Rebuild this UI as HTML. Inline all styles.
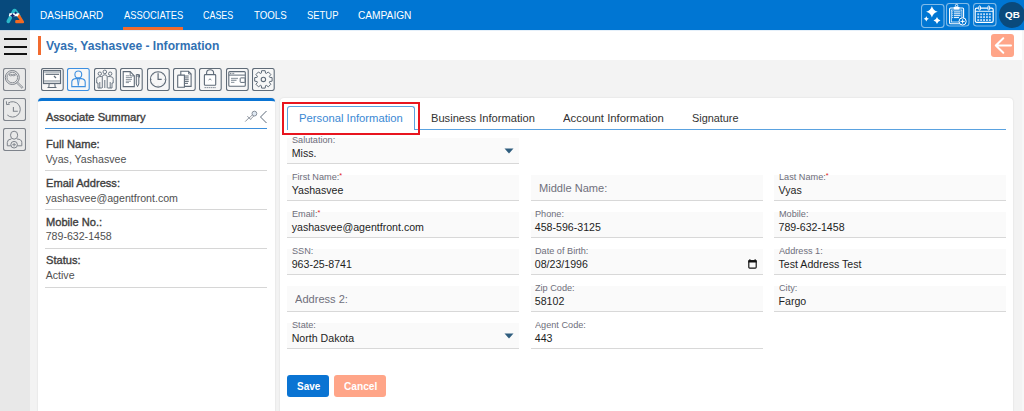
<!DOCTYPE html>
<html><head><meta charset="utf-8">
<style>
*{box-sizing:border-box;margin:0;padding:0}
html,body{width:1024px;height:411px;overflow:hidden;background:#f3f3f3;font-family:"Liberation Sans",sans-serif;position:relative}
div{position:absolute}
.t{height:0;line-height:0;white-space:nowrap;transform-origin:0 0}
#nav{left:0;top:0;width:1024px;height:30px;background:#0076d3}
#logo{left:0;top:0;width:30px;height:30px;background:#074a7d}
#ul{left:123px;top:27px;width:60px;height:3px;background:#f26b2f}
.tico{width:23px;height:23px;border:1px solid rgba(255,255,255,.45);border-radius:3px}
#avatar{left:999px;top:2px;width:26px;height:26px;border-radius:50%;background:#0a4a7c}
#side{left:0;top:30px;width:30px;height:381px;background:#e8e8e8}
.ham{left:4px;width:23px;height:2px;background:#111}
.sico{left:3px;width:23px;height:23px;border:1px solid #8a8f98;border-radius:2px}
#hdr{left:30px;top:30px;width:994px;height:30px;background:#fff}
#obar{left:38px;top:36px;width:3px;height:19px;background:#f26b2f}
#back{left:991px;top:34px;width:23px;height:23px;background:#ffa588;border-radius:3px}
.tb{top:68px;width:23px;height:23px;border:1px solid #6f7884;border-radius:2px;background:#f7f7f7}
#sum{left:38px;top:98px;width:237px;height:320px;background:#fff;border-top:3px solid #0a74d3;border-radius:4px 4px 0 0;box-shadow:0 0 2px rgba(0,0,0,.12)}
#main{left:280px;top:98px;width:733px;height:320px;background:#fff;border-radius:4px 4px 0 0;box-shadow:0 0 2px rgba(0,0,0,.12)}
.dv{left:45px;width:222px;height:1px;background:#d6d6d6}
.f{width:232px;height:26px;background:#fafafa;border-bottom:1px solid #d8d8d8}
.btn{top:375px;height:22px;border-radius:3px}

</style></head><body>
<div id="nav"></div>
<div id="logo"></div>
<div id="ul"></div>
<div id="avatar"></div>

<div id="side"></div>
<div class="ham" style="top:38px"></div>
<div class="ham" style="top:46px"></div>
<div class="ham" style="top:53px"></div>

<div id="hdr"></div>
<div id="obar"></div>
<div id="back"></div>
<div style="left:1022px;top:30px;width:2px;height:381px;background:#f7f7f7"></div>
<div style="left:0;top:30px;width:1024px;height:1px;background:rgba(0,110,210,.10)"></div>


<div id="sum"></div>
<div class="dv" style="top:128px;background:#3b8fdc"></div>
<div class="dv" style="top:170px"></div>
<div class="dv" style="top:209px"></div>
<div class="dv" style="top:248px"></div>
<div class="dv" style="top:287px"></div>

<div id="main"></div>
<div style="left:287px;top:129px;width:719px;height:1px;background:#5aa2e0"></div>
<div style="left:287px;top:106px;width:128px;height:24px;background:#fff;border:1px solid #5aa2e0;border-bottom:none;border-radius:3px 3px 0 0"></div>
<div style="left:282px;top:102px;width:138px;height:33px;border:2px solid #e8151f"></div>

<div class="f" style="left:287px;top:138px"></div>
<div class="f" style="left:287px;top:175px"></div>
<div class="f" style="left:531px;top:175px"></div>
<div class="f" style="left:774px;top:175px"></div>
<div class="f" style="left:287px;top:212px"></div>
<div class="f" style="left:531px;top:212px"></div>
<div class="f" style="left:774px;top:212px"></div>
<div class="f" style="left:287px;top:249px"></div>
<div class="f" style="left:531px;top:249px"></div>
<div class="f" style="left:774px;top:249px"></div>
<div class="f" style="left:287px;top:286px"></div>
<div class="f" style="left:531px;top:286px"></div>
<div class="f" style="left:774px;top:286px"></div>
<div class="f" style="left:287px;top:323px"></div>
<div class="f" style="left:531px;top:323px;background:#fff"></div>

<div class="btn" style="left:287px;width:42px;background:#0a74d3"></div>
<div class="btn" style="left:334px;width:52px;background:#ffa588"></div>

<svg style="position:absolute;left:41.0px;top:68px" width="23" height="23" viewBox="0 0 23 23" fill="none"><rect x="0.5" y="0.5" width="21.7" height="22" rx="2" stroke="#5f6b78" stroke-width="1.1" fill="#f7f7f7"/><rect x="2.5" y="2.5" width="17" height="13" stroke="#5f6b78" stroke-width="1.2" fill="#fff"/>
<rect x="3" y="3" width="16" height="2" fill="#b9c0c6"/>
<line x1="4.5" y1="6.3" x2="18" y2="6.3" stroke="#5f6b78" stroke-width="1.2"/>
<path d="M13 8 l2 2" stroke="#5f6b78" stroke-width="1.3"/>
<rect x="3" y="12" width="16" height="2.5" fill="#b9c0c6"/>
<path d="M8.2 15.5 L7.8 19.3 M13.8 15.5 L14.2 19.3 M6.5 19.5 H15.5" stroke="#5f6b78" stroke-width="1"/></svg>
<svg style="position:absolute;left:67.4px;top:68px" width="23" height="23" viewBox="0 0 23 23" fill="none"><rect x="0.5" y="0.5" width="21.7" height="22" rx="2" stroke="#3d8fe0" stroke-width="1.1" fill="#f7f7f7"/><circle cx="11.3" cy="6.4" r="3.4" stroke="#3d8fe0" stroke-width="1.1"/>
<path d="M4.8 18.6 V14 Q4.8 11 8.5 10.6 H14.3 Q18.2 11 18.2 14 V18.6 Z" stroke="#3d8fe0" stroke-width="1.1"/>
<path d="M10.3 10.8 L11.3 17.5 L12.3 10.8" stroke="#3d8fe0" stroke-width="0.9"/></svg>
<svg style="position:absolute;left:93.8px;top:68px" width="23" height="23" viewBox="0 0 23 23" fill="none"><rect x="0.5" y="0.5" width="21.7" height="22" rx="2" stroke="#5f6b78" stroke-width="1.1" fill="#f7f7f7"/><g stroke="#5f6b78" stroke-width="0.9">
<circle cx="10.8" cy="3.9" r="1.8"/><circle cx="5.8" cy="5.7" r="1.7"/><circle cx="16.2" cy="5.7" r="1.7"/>
<path d="M8.3 20 V8.8 Q8.3 6.8 10.8 6.8 Q13.2 6.8 13.2 8.8 V20 M10.8 12 V20"/>
<path d="M7.9 8.6 Q5.8 8.2 3.5 9.2 Q2.6 9.8 2.7 11.5 V15 H4 V20 H7.9 M5.8 14 V20"/>
<path d="M13.6 8.6 Q16.2 8.2 18.4 9.2 Q19.3 9.8 19.2 11.5 V15 H18 V20 H13.6 M16.2 14 V20"/>
</g></svg>
<svg style="position:absolute;left:120.2px;top:68px" width="23" height="23" viewBox="0 0 23 23" fill="none"><rect x="0.5" y="0.5" width="21.7" height="22" rx="2" stroke="#5f6b78" stroke-width="1.1" fill="#f7f7f7"/><path d="M3.2 3.6 H10.2 L14.3 7.9 V18.6 H3.2 Z" stroke="#5f6b78" stroke-width="1.1" fill="#fff"/>
<path d="M10.2 3.6 V7.9 H14.3" stroke="#5f6b78" stroke-width="0.9"/>
<g stroke="#8c959e" stroke-width="1"><line x1="5.8" y1="7.8" x2="9.5" y2="7.8"/><line x1="5.8" y1="9.6" x2="12" y2="9.6"/><line x1="5.8" y1="11.4" x2="12" y2="11.4"/><line x1="5.8" y1="13.2" x2="11" y2="13.2"/><line x1="5.8" y1="14.6" x2="9" y2="14.6"/></g>
<path d="M16.3 6.5 H18.8 V16 L17.55 18.6 L16.3 16 Z M16.3 8 H18.8 M18.8 6.8 H19.5 V9.5" stroke="#5f6b78" stroke-width="1"/></svg>
<svg style="position:absolute;left:146.6px;top:68px" width="23" height="23" viewBox="0 0 23 23" fill="none"><rect x="0.5" y="0.5" width="21.7" height="22" rx="2" stroke="#5f6b78" stroke-width="1.1" fill="#f7f7f7"/><circle cx="11.1" cy="11.4" r="7.7" stroke="#5f6b78" stroke-width="1.1"/>
<path d="M11.1 5.3 V11.4 H14.7" stroke="#5f6b78" stroke-width="1.2"/>
<g stroke="#8a939c" stroke-width="0.8"><path d="M11.1 4.2 v1 M11.1 17.6 v1 M3.9 11.4 h1 M17.3 11.4 h1 M6 6.3 l0.7 0.7 M15.5 15.8 l0.7 0.7 M16.2 6.3 l-0.7 0.7 M6.7 15.8 l-0.7 0.7"/></g></svg>
<svg style="position:absolute;left:173.0px;top:68px" width="23" height="23" viewBox="0 0 23 23" fill="none"><rect x="0.5" y="0.5" width="21.7" height="22" rx="2" stroke="#5f6b78" stroke-width="1.1" fill="#f7f7f7"/><path d="M7.8 3.3 H15.5 L18.1 6 V18.4 H7.8 Z" stroke="#5f6b78" stroke-width="1.1" fill="#fff"/>
<path d="M15.5 3.3 V6 H18.1" stroke="#5f6b78" stroke-width="0.8"/>
<g stroke="#6e7883" stroke-width="1.1"><line x1="11.4" y1="8" x2="15.7" y2="8"/><line x1="11.4" y1="9.9" x2="15.7" y2="9.9"/><line x1="11.4" y1="11.7" x2="15.7" y2="11.7"/><line x1="11.4" y1="13.5" x2="15.7" y2="13.5"/><line x1="11.4" y1="15.4" x2="15" y2="15.4"/></g>
<path d="M4.7 7.8 Q4.7 7.1 5.7 7.1 H11.4 V19.3 H4.7 Z" stroke="#5f6b78" stroke-width="1.1" fill="#fff"/></svg>
<svg style="position:absolute;left:199.4px;top:68px" width="23" height="23" viewBox="0 0 23 23" fill="none"><rect x="0.5" y="0.5" width="21.7" height="22" rx="2" stroke="#5f6b78" stroke-width="1.1" fill="#f7f7f7"/><path d="M7.6 6.6 V4.8 Q7.6 1.7 11.1 1.7 Q14.6 1.7 14.6 4.8 V6.6" stroke="#5f6b78" stroke-width="1.1"/>
<rect x="5.4" y="6.6" width="11.3" height="10.6" rx="0.8" stroke="#5f6b78" stroke-width="1.1" fill="#fff"/>
<path d="M9.6 12 L11 10.8 L12.4 12" stroke="#5f6b78" stroke-width="0.9"/>
<g fill="#5f6b78"><rect x="5.6" y="19.2" width="1.2" height="0.9"/><rect x="7.6" y="19.2" width="1.2" height="0.9"/><rect x="9.6" y="19.2" width="1.2" height="0.9"/><rect x="11.6" y="19.2" width="1.2" height="0.9"/><rect x="13.6" y="19.2" width="1.2" height="0.9"/><rect x="15.4" y="19.2" width="1.2" height="0.9"/></g></svg>
<svg style="position:absolute;left:225.8px;top:68px" width="23" height="23" viewBox="0 0 23 23" fill="none"><rect x="0.5" y="0.5" width="21.7" height="22" rx="2" stroke="#5f6b78" stroke-width="1.1" fill="#f7f7f7"/><rect x="2.8" y="3.6" width="16.5" height="14.7" rx="1" stroke="#5f6b78" stroke-width="1.1" fill="#fff"/>
<line x1="2.8" y1="7.1" x2="19.3" y2="7.1" stroke="#5f6b78" stroke-width="1"/>
<g fill="#7d8791"><rect x="4" y="4.8" width="1" height="1.3"/><rect x="5.6" y="4.8" width="1" height="1.3"/><rect x="7.2" y="4.8" width="1" height="1.3"/></g>
<g fill="#98a1a9"><rect x="5" y="9.8" width="7" height="1.3"/><rect x="5" y="11.7" width="5.5" height="1.3"/><rect x="5" y="13.8" width="3.4" height="1.2"/></g>
<rect x="14.2" y="9.9" width="5" height="4.5" rx="0.6" stroke="#5f6b78" stroke-width="1"/></svg>
<svg style="position:absolute;left:252.2px;top:68px" width="23" height="23" viewBox="0 0 23 23" fill="none"><rect x="0.5" y="0.5" width="21.7" height="22" rx="2" stroke="#5f6b78" stroke-width="1.1" fill="#f7f7f7"/><path d="M9.26 5.16 L9.63 2.68 L13.17 2.68 L13.54 5.16 L14.30 5.47 L16.32 3.98 L18.82 6.48 L17.33 8.50 L17.64 9.26 L20.12 9.63 L20.12 13.17 L17.64 13.54 L17.33 14.30 L18.82 16.32 L16.32 18.82 L14.30 17.33 L13.54 17.64 L13.17 20.12 L9.63 20.12 L9.26 17.64 L8.50 17.33 L6.48 18.82 L3.98 16.32 L5.47 14.30 L5.16 13.54 L2.68 13.17 L2.68 9.63 L5.16 9.26 L5.47 8.50 L3.98 6.48 L6.48 3.98 L8.50 5.47Z" stroke="#5f6b78" stroke-width="1" stroke-linejoin="round"/>
<circle cx="11.4" cy="11.4" r="2.2" stroke="#5f6b78" stroke-width="1.1"/></svg>
<svg style="position:absolute;left:3px;top:68px" width="23" height="23" viewBox="0 0 23 23" fill="none"><rect x="0.5" y="0.5" width="22" height="22" rx="2" stroke="#7e838b" stroke-width="1.1" fill="#e9e9e9"/><circle cx="9.3" cy="9.5" r="7" stroke="#7e838b" stroke-width="1"/><circle cx="9.3" cy="9.5" r="5.3" stroke="#7e838b" stroke-width="0.9"/>
<path d="M14.5 14 L20 19.3 L19 20.3 L13.5 15" stroke="#7e838b" stroke-width="0.9"/>
<path d="M6 7 Q7.5 5.5 9.3 6.8 Q11 5.5 12.6 7 Q11 8.5 9.3 7.5 Q7.5 8.5 6 7Z" stroke="#7e838b" stroke-width="0.8"/></svg>
<svg style="position:absolute;left:3px;top:98px" width="23" height="23" viewBox="0 0 23 23" fill="none"><rect x="0.5" y="0.5" width="22" height="22" rx="2" stroke="#7e838b" stroke-width="1.1" fill="#e9e9e9"/><path d="M5 5.2 A7.7 7.7 0 1 1 4.3 17" stroke="#7e838b" stroke-width="1"/>
<path d="M3.4 3.3 L3.6 6.6 L6.8 6.2" stroke="#7e838b" stroke-width="1"/>
<path d="M10.4 9 V13.3 H14.8" stroke="#7e838b" stroke-width="1.1"/></svg>
<svg style="position:absolute;left:3px;top:128px" width="23" height="23" viewBox="0 0 23 23" fill="none"><rect x="0.5" y="0.5" width="22" height="22" rx="2" stroke="#7e838b" stroke-width="1.1" fill="#e9e9e9"/><ellipse cx="11.1" cy="7.2" rx="3.6" ry="4" stroke="#7e838b" stroke-width="1"/>
<path d="M4.3 17.8 V14.5 Q4.3 11.2 8.3 11 M18.8 17.8 V14.5 Q18.8 11.2 14 11 M4.3 17.8 H7.8 M18.8 17.8 H14.4" stroke="#7e838b" stroke-width="1"/>
<circle cx="11.1" cy="16.7" r="3.3" stroke="#7e838b" stroke-width="1"/>
<path d="M11.1 14.9 V18.5 M9.3 16.7 H12.9" stroke="#7e838b" stroke-width="0.9"/></svg>
<svg style="position:absolute;left:921px;top:4px" width="24" height="24" viewBox="0 0 24 24" fill="none"><rect x="0.5" y="0.5" width="22.5" height="23" rx="3" stroke="rgba(255,255,255,0.5)" stroke-width="1.1"/><path d="M10.9 2.0 Q12.06 6.64 16.7 7.8 Q12.06 8.959999999999999 10.9 13.6 Q9.74 8.959999999999999 5.1000000000000005 7.8 Q9.74 6.64 10.9 2.0Z" fill="#fff"/><path d="M5.3 12.200000000000001 Q5.82 14.280000000000001 7.9 14.8 Q5.82 15.32 5.3 17.400000000000002 Q4.779999999999999 15.32 2.6999999999999997 14.8 Q4.779999999999999 14.280000000000001 5.3 12.200000000000001Z" fill="#fff"/><path d="M16 13.0 Q16.7 15.8 19.5 16.5 Q16.7 17.2 16 20.0 Q15.3 17.2 12.5 16.5 Q15.3 15.8 16 13.0Z" fill="#fff"/></svg>
<svg style="position:absolute;left:946px;top:3px" width="24" height="24" viewBox="0 0 24 24" fill="none"><rect x="0.5" y="0.5" width="22.5" height="22.5" rx="3" stroke="rgba(255,255,255,0.5)" stroke-width="1.1"/><rect x="3.6" y="5" width="14" height="15.8" rx="1" stroke="#fff" stroke-width="1.1"/>
<rect x="5.3" y="7" width="10.6" height="12" stroke="#fff" stroke-width="0.7"/>
<rect x="7.7" y="3.8" width="5.8" height="2.6" rx="0.8" fill="#fff"/>
<circle cx="10.6" cy="2.6" r="1.2" stroke="#fff" stroke-width="0.9"/>
<g stroke="#fff" stroke-width="1"><line x1="8" y1="8.9" x2="14.5" y2="8.9"/><line x1="8" y1="10.8" x2="14.5" y2="10.8"/><line x1="8" y1="12.7" x2="14.5" y2="12.7"/><line x1="8" y1="14.6" x2="13" y2="14.6"/></g>
<g fill="#fff"><rect x="6.2" y="8.4" width="1" height="1"/><rect x="6.2" y="10.3" width="1" height="1"/><rect x="6.2" y="12.2" width="1" height="1"/><rect x="6.2" y="14.1" width="1" height="1"/></g>
<circle cx="16.6" cy="18.4" r="3.6" fill="#0076d3" stroke="#fff" stroke-width="1"/>
<path d="M16.6 16.3 V20.5 M14.5 18.4 H18.7" stroke="#fff" stroke-width="1"/></svg>
<svg style="position:absolute;left:973px;top:3px" width="24" height="24" viewBox="0 0 24 24" fill="none"><rect x="0.5" y="0.5" width="22.5" height="22.5" rx="3" stroke="rgba(255,255,255,0.5)" stroke-width="1.1"/><rect x="2.2" y="5.2" width="18" height="14.2" rx="1.6" stroke="#fff" stroke-width="1.2"/>
<line x1="2.2" y1="8.3" x2="20.2" y2="8.3" stroke="#fff" stroke-width="0.9"/>
<g stroke="#fff" stroke-width="0.9" fill="#0076d3"><rect x="5.9" y="2.8" width="1.6" height="4.4" rx="0.8"/><rect x="15" y="2.8" width="1.6" height="4.4" rx="0.8"/></g>
<g fill="#bcd9f5"><rect x="4.3" y="10.3" width="1.9" height="1.9"/><rect x="7.2" y="10.3" width="1.9" height="1.9"/><rect x="10.1" y="10.3" width="1.9" height="1.9"/><rect x="13.0" y="10.3" width="1.9" height="1.9"/><rect x="15.9" y="10.3" width="1.9" height="1.9"/><rect x="4.3" y="13.2" width="1.9" height="1.9"/><rect x="7.2" y="13.2" width="1.9" height="1.9"/><rect x="10.1" y="13.2" width="1.9" height="1.9"/><rect x="13.0" y="13.2" width="1.9" height="1.9"/><rect x="15.9" y="13.2" width="1.9" height="1.9"/><rect x="4.3" y="16.1" width="1.9" height="1.9"/><rect x="7.2" y="16.1" width="1.9" height="1.9"/><rect x="10.1" y="16.1" width="1.9" height="1.9"/><rect x="13.0" y="16.1" width="1.9" height="1.9"/><rect x="15.9" y="16.1" width="1.9" height="1.9"/></g></svg>
<svg style="position:absolute;left:0px;top:0px" width="30" height="30" viewBox="0 0 30 30" fill="none"><path d="M8.3 21.4 L13.9 11 Q14.6 9.9 15.3 11 L18.8 16" stroke="#2bb8c9" stroke-width="3.6" stroke-linecap="round" stroke-linejoin="round"/>
<path d="M19 13.4 L24 21.4 Q24.6 23.3 22.6 23.3 H16.2 Q15.2 23.3 15.2 22.3 V21 Q15.2 20.1 16.2 20.1 H19.6 L16.4 15.2 Z" fill="#f26a22"/>
<path d="M9.4 13.3 L19.4 13.3 L17.8 16.2 L8.8 16.2 Z" fill="#fff"/>
<path d="M12.5 12.9 Q13.0 14.9 15.0 15.4 Q13.0 15.9 12.5 17.9 Q12.0 15.9 10.0 15.4 Q12.0 14.9 12.5 12.9Z" fill="#15246a"/><path d="M15.7 11.200000000000001 Q16.04 12.56 17.4 12.9 Q16.04 13.24 15.7 14.6 Q15.36 13.24 14.0 12.9 Q15.36 12.56 15.7 11.200000000000001Z" fill="#15246a"/></svg>
<svg style="position:absolute;left:991px;top:34px" width="23" height="23" viewBox="0 0 23 23" fill="none"><path d="M4.8 11.5 H20 M12.3 4.3 L4.8 11.5 L12.3 18.7" stroke="#fff" stroke-width="2" stroke-linecap="round" stroke-linejoin="round"/></svg>
<svg style="position:absolute;left:244px;top:109px" width="24" height="15" viewBox="0 0 24 15" fill="none"><path d="M1.2 12.6 L5.2 8.6" stroke="#7d8591" stroke-width="0.9"/>
<path d="M3.4 7.2 L7 10.8" stroke="#7d8591" stroke-width="0.9"/>
<path d="M5.3 8.9 L8.8 5.4 M6.6 10.2 L10.1 6.7" stroke="#7d8591" stroke-width="0.8"/>
<circle cx="10.4" cy="4.6" r="2.4" stroke="#7d8591" stroke-width="0.9" fill="#dfe8f2"/>
<path d="M22.5 2 L16.5 8 L22.5 14" stroke="#5d6a7a" stroke-width="1"/></svg>
<svg style="position:absolute;left:504px;top:148px" width="10" height="6" viewBox="0 0 10 6" fill="none"><path d="M0.5 0.5 H9.5 L5 5.5Z" fill="#2f5d7e"/></svg>
<svg style="position:absolute;left:504px;top:333px" width="10" height="6" viewBox="0 0 10 6" fill="none"><path d="M0.5 0.5 H9.5 L5 5.5Z" fill="#2f5d7e"/></svg>
<svg style="position:absolute;left:748px;top:259px" width="10" height="10" viewBox="0 0 10 10" fill="none"><rect x="0.8" y="1.8" width="7.4" height="7.3" rx="0.9" stroke="#111" stroke-width="1.15"/><rect x="0.3" y="1.2" width="8.4" height="2.3" fill="#111"/><rect x="1.2" y="0.3" width="1.3" height="1.2" fill="#111"/><rect x="6.5" y="0.3" width="1.3" height="1.2" fill="#111"/></svg>
<div class="t" style="left:40.2px;top:15.03px;font-size:11.73px;color:#fff;font-weight:normal;transform:scaleX(0.853);">DASHBOARD</div>
<div class="t" style="left:123.8px;top:15.03px;font-size:11.73px;color:#fff;font-weight:normal;transform:scaleX(0.799);">ASSOCIATES</div>
<div class="t" style="left:203.3px;top:15.03px;font-size:11.73px;color:#fff;font-weight:normal;transform:scaleX(0.762);">CASES</div>
<div class="t" style="left:253.9px;top:15.03px;font-size:11.73px;color:#fff;font-weight:normal;transform:scaleX(0.827);">TOOLS</div>
<div class="t" style="left:306.6px;top:15.03px;font-size:11.73px;color:#fff;font-weight:normal;transform:scaleX(0.805);">SETUP</div>
<div class="t" style="left:358.3px;top:15.03px;font-size:11.73px;color:#fff;font-weight:normal;transform:scaleX(0.867);">CAMPAIGN</div>
<div class="t" style="left:1004.5px;top:15.31px;font-size:9.78px;color:#fff;font-weight:bold;transform:scaleX(1.016);">QB</div>
<div class="t" style="left:45.6px;top:45.55px;font-size:13.13px;color:#3271b3;font-weight:bold;transform:scaleX(0.921);">Vyas, Yashasvee - Information</div>
<div class="t" style="left:45.7px;top:116.72px;font-size:10.61px;color:#3e3e3e;font-weight:normal;-webkit-text-stroke:0.35px #3e3e3e;transform:scaleX(1.055);">Associate Summary</div>
<div class="t" style="left:45.7px;top:144.03px;font-size:10.89px;color:#3e3e3e;font-weight:normal;-webkit-text-stroke:0.35px #3e3e3e;transform:scaleX(1.020);">Full Name:</div>
<div class="t" style="left:45.7px;top:158.72px;font-size:10.61px;color:#505050;font-weight:normal;">Vyas, Yashasvee</div>
<div class="t" style="left:45.7px;top:182.83px;font-size:10.89px;color:#3e3e3e;font-weight:normal;-webkit-text-stroke:0.35px #3e3e3e;transform:scaleX(1.020);">Email Address:</div>
<div class="t" style="left:45.7px;top:197.52px;font-size:10.61px;color:#505050;font-weight:normal;">yashasvee@agentfront.com</div>
<div class="t" style="left:45.7px;top:221.63px;font-size:10.89px;color:#3e3e3e;font-weight:normal;-webkit-text-stroke:0.35px #3e3e3e;transform:scaleX(1.020);">Mobile No.:</div>
<div class="t" style="left:45.7px;top:236.32px;font-size:10.61px;color:#505050;font-weight:normal;">789-632-1458</div>
<div class="t" style="left:45.7px;top:260.43px;font-size:10.89px;color:#3e3e3e;font-weight:normal;-webkit-text-stroke:0.35px #3e3e3e;transform:scaleX(1.020);">Status:</div>
<div class="t" style="left:45.7px;top:275.12px;font-size:10.61px;color:#505050;font-weight:normal;">Active</div>
<div class="t" style="left:299.4px;top:117.78px;font-size:11.59px;color:#3b89d4;font-weight:normal;transform:scaleX(0.972);">Personal Information</div>
<div class="t" style="left:431.3px;top:117.78px;font-size:11.59px;color:#333;font-weight:normal;transform:scaleX(0.961);">Business Information</div>
<div class="t" style="left:563.0px;top:117.78px;font-size:11.59px;color:#333;font-weight:normal;transform:scaleX(0.980);">Account Information</div>
<div class="t" style="left:691.9px;top:117.78px;font-size:11.59px;color:#333;font-weight:normal;transform:scaleX(0.939);">Signature</div>
<div class="t" style="left:291.7px;top:139.65px;font-size:8.80px;color:#6e6e7a;font-weight:normal;transform:scaleX(1.040);">Salutation:</div>
<div class="t" style="left:291.7px;top:152.82px;font-size:10.61px;color:#1e1e1e;font-weight:normal;">Miss.</div>
<div class="t" style="left:291.7px;top:176.65px;font-size:8.80px;color:#6e6e7a;font-weight:normal;transform:scaleX(1.040);">First Name:<span style="color:#e02020;font-size:7px;position:relative;top:-2px">*</span></div>
<div class="t" style="left:291.7px;top:189.82px;font-size:10.61px;color:#1e1e1e;font-weight:normal;">Yashasvee</div>
<div class="t" style="left:538.7px;top:187.58px;font-size:11.31px;color:#70707c;font-weight:normal;transform:scaleX(0.980);">Middle Name:</div>
<div class="t" style="left:778.5px;top:176.65px;font-size:8.80px;color:#6e6e7a;font-weight:normal;transform:scaleX(1.040);">Last Name:<span style="color:#e02020;font-size:7px;position:relative;top:-2px">*</span></div>
<div class="t" style="left:778.5px;top:189.82px;font-size:10.61px;color:#1e1e1e;font-weight:normal;">Vyas</div>
<div class="t" style="left:291.7px;top:213.65px;font-size:8.80px;color:#6e6e7a;font-weight:normal;transform:scaleX(1.040);">Email:<span style="color:#e02020;font-size:7px;position:relative;top:-2px">*</span></div>
<div class="t" style="left:291.7px;top:226.82px;font-size:10.61px;color:#1e1e1e;font-weight:normal;">yashasvee@agentfront.com</div>
<div class="t" style="left:534.8px;top:213.65px;font-size:8.80px;color:#6e6e7a;font-weight:normal;transform:scaleX(1.040);">Phone:</div>
<div class="t" style="left:534.8px;top:226.82px;font-size:10.61px;color:#1e1e1e;font-weight:normal;">458-596-3125</div>
<div class="t" style="left:778.5px;top:213.65px;font-size:8.80px;color:#6e6e7a;font-weight:normal;transform:scaleX(1.040);">Mobile:</div>
<div class="t" style="left:778.5px;top:226.82px;font-size:10.61px;color:#1e1e1e;font-weight:normal;">789-632-1458</div>
<div class="t" style="left:291.7px;top:250.65px;font-size:8.80px;color:#6e6e7a;font-weight:normal;transform:scaleX(1.040);">SSN:</div>
<div class="t" style="left:291.7px;top:263.82px;font-size:10.61px;color:#1e1e1e;font-weight:normal;">963-25-8741</div>
<div class="t" style="left:534.8px;top:250.65px;font-size:8.80px;color:#6e6e7a;font-weight:normal;transform:scaleX(1.040);">Date of Birth:</div>
<div class="t" style="left:534.8px;top:263.82px;font-size:10.61px;color:#1e1e1e;font-weight:normal;">08/23/1996</div>
<div class="t" style="left:778.5px;top:250.65px;font-size:8.80px;color:#6e6e7a;font-weight:normal;transform:scaleX(1.040);">Address 1:</div>
<div class="t" style="left:778.5px;top:263.82px;font-size:10.61px;color:#1e1e1e;font-weight:normal;">Test Address Test</div>
<div class="t" style="left:295.2px;top:298.58px;font-size:11.31px;color:#70707c;font-weight:normal;transform:scaleX(0.980);">Address 2:</div>
<div class="t" style="left:534.8px;top:287.65px;font-size:8.80px;color:#6e6e7a;font-weight:normal;transform:scaleX(1.040);">Zip Code:</div>
<div class="t" style="left:534.8px;top:300.82px;font-size:10.61px;color:#1e1e1e;font-weight:normal;">58102</div>
<div class="t" style="left:778.5px;top:287.65px;font-size:8.80px;color:#6e6e7a;font-weight:normal;transform:scaleX(1.040);">City:</div>
<div class="t" style="left:778.5px;top:300.82px;font-size:10.61px;color:#1e1e1e;font-weight:normal;">Fargo</div>
<div class="t" style="left:291.7px;top:324.65px;font-size:8.80px;color:#6e6e7a;font-weight:normal;transform:scaleX(1.040);">State:</div>
<div class="t" style="left:291.7px;top:337.82px;font-size:10.61px;color:#1e1e1e;font-weight:normal;">North Dakota</div>
<div class="t" style="left:534.8px;top:324.65px;font-size:8.80px;color:#6e6e7a;font-weight:normal;transform:scaleX(1.040);">Agent Code:</div>
<div class="t" style="left:534.8px;top:337.82px;font-size:10.61px;color:#1e1e1e;font-weight:normal;">443</div>
<div class="t" style="left:296.6px;top:386.08px;font-size:11.03px;color:#fff;font-weight:bold;transform:scaleX(0.904);">Save</div>
<div class="t" style="left:343.9px;top:386.08px;font-size:11.03px;color:#fff;font-weight:bold;transform:scaleX(0.923);">Cancel</div>
</body></html>
